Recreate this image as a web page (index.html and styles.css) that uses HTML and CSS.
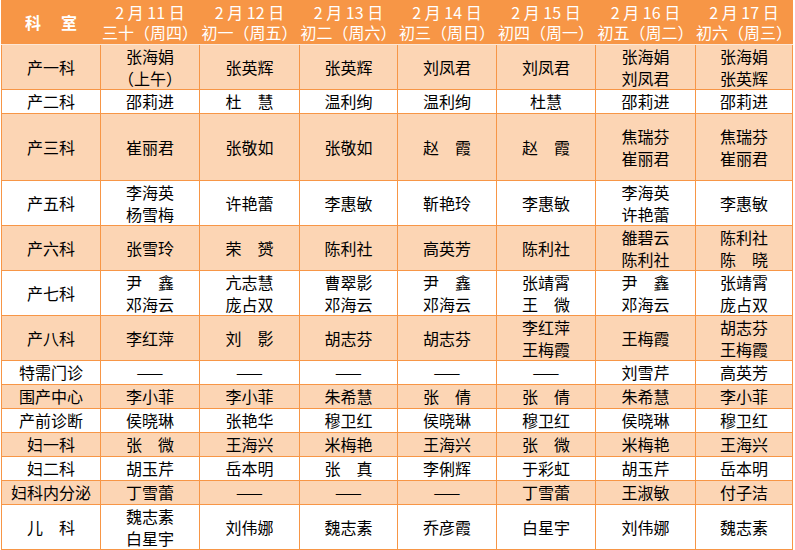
FILE: index.html
```html
<!DOCTYPE html>
<html lang="zh">
<head>
<meta charset="utf-8">
<link rel="stylesheet" href="styles.css">
</head>
<body>
<table class="sched">
<colgroup>
<col class="c0"><col class="c1"><col class="c2"><col class="c3"><col class="c4"><col class="c5"><col class="c6"><col class="c7">
</colgroup>
<thead>
<tr class="h-head">
<th class="dept-h">科　室</th>
<th><span class="hl">2 月 11 日</span><span class="hl">三十（周四）</span></th>
<th><span class="hl">2 月 12 日</span><span class="hl">初一（周五）</span></th>
<th><span class="hl">2 月 13 日</span><span class="hl">初二（周六）</span></th>
<th><span class="hl">2 月 14 日</span><span class="hl">初三（周日）</span></th>
<th><span class="hl">2 月 15 日</span><span class="hl">初四（周一）</span></th>
<th><span class="hl">2 月 16 日</span><span class="hl">初五（周二）</span></th>
<th><span class="hl">2 月 17 日</span><span class="hl">初六（周三）</span></th>
</tr>
</thead>
<tbody>
<tr class="peach h45"><td>产一科</td><td>张海娟<br>（上午）</td><td>张英辉</td><td>张英辉</td><td>刘凤君</td><td>刘凤君</td><td>张海娟<br>刘凤君</td><td>张海娟<br>张英辉</td></tr>
<tr class="white h24"><td>产二科</td><td>邵莉进</td><td>杜　慧</td><td>温利绚</td><td>温利绚</td><td>杜慧</td><td>邵莉进</td><td>邵莉进</td></tr>
<tr class="peach h67"><td>产三科</td><td>崔丽君</td><td>张敬如</td><td>张敬如</td><td>赵　霞</td><td>赵　霞</td><td>焦瑞芬<br>崔丽君</td><td>焦瑞芬<br>崔丽君</td></tr>
<tr class="white h45"><td>产五科</td><td>李海英<br>杨雪梅</td><td>许艳蕾</td><td>李惠敏</td><td>靳艳玲</td><td>李惠敏</td><td>李海英<br>许艳蕾</td><td>李惠敏</td></tr>
<tr class="peach h45"><td>产六科</td><td>张雪玲</td><td>荣　赟</td><td>陈利社</td><td>高英芳</td><td>陈利社</td><td>雒碧云<br>陈利社</td><td>陈利社<br>陈　晓</td></tr>
<tr class="white h45"><td>产七科</td><td>尹　鑫<br>邓海云</td><td>亢志慧<br>庞占双</td><td>曹翠影<br>邓海云</td><td>尹　鑫<br>邓海云</td><td>张靖霄<br>王　微</td><td>尹　鑫<br>邓海云</td><td>张靖霄<br>庞占双</td></tr>
<tr class="peach h45"><td>产八科</td><td>李红萍</td><td>刘　影</td><td>胡志芬</td><td>胡志芬</td><td>李红萍<br>王梅霞</td><td>王梅霞</td><td>胡志芬<br>王梅霞</td></tr>
<tr class="white h24"><td>特需门诊</td><td>——</td><td>——</td><td>——</td><td>——</td><td>——</td><td>刘雪芹</td><td>高英芳</td></tr>
<tr class="peach h24"><td>围产中心</td><td>李小菲</td><td>李小菲</td><td>朱希慧</td><td>张　倩</td><td>张　倩</td><td>朱希慧</td><td>李小菲</td></tr>
<tr class="white h24"><td>产前诊断</td><td>侯晓琳</td><td>张艳华</td><td>穆卫红</td><td>侯晓琳</td><td>穆卫红</td><td>侯晓琳</td><td>穆卫红</td></tr>
<tr class="peach h24"><td>妇一科</td><td>张　微</td><td>王海兴</td><td>米梅艳</td><td>王海兴</td><td>张　微</td><td>米梅艳</td><td>王海兴</td></tr>
<tr class="white h24"><td>妇二科</td><td>胡玉芹</td><td>岳本明</td><td>张　真</td><td>李俐辉</td><td>于彩虹</td><td>胡玉芹</td><td>岳本明</td></tr>
<tr class="peach h24"><td>妇科内分泌</td><td>丁雪蕾</td><td>——</td><td>——</td><td>——</td><td>丁雪蕾</td><td>王淑敏</td><td>付子洁</td></tr>
<tr class="white h44"><td>儿　科</td><td>魏志素<br>白星宇</td><td>刘伟娜</td><td>魏志素</td><td>乔彦霞</td><td>白星宇</td><td>刘伟娜</td><td>魏志素</td></tr>
</tbody>
</table>
</body>
</html>
```
FILE: styles.css
```css
html, body {
  margin: 0;
  padding: 0;
  background: #ffffff;
}
body {
  font-family: "Noto Sans CJK SC", "Noto Sans", sans-serif;
  font-size: 16px;
  color: #000;
}
.sched {
  margin-left: 1px;
  width: 792px;
  border-collapse: collapse;
  table-layout: fixed;
}
.c0 { width: 99px; }
.c1 { width: 99px; }
.c2 { width: 100px; }
.c3 { width: 98px; }
.c4 { width: 99px; }
.c5 { width: 99px; }
.c6 { width: 100px; }
.c7 { width: 97px; }
.sched th, .sched td {
  padding: 0;
  text-align: center;
  vertical-align: middle;
  line-height: 22px;
  white-space: nowrap;
  overflow: hidden;
}
.sched td {
  border: 1px solid #f79646;
}
.sched th {
  background: #f79646;
  color: #fff;
  font-weight: normal;
  border: 1px solid #f79646;
  border-top: none;
  border-bottom: 1px solid #fde7d6;
}
.hl {
  display: block;
  height: 20px;
  line-height: 20px;
}
.sched th.dept-h {
  font-weight: bold;
  letter-spacing: 2px;
  padding-left: 2px;
}
.h-head { height: 44px; }
.peach td { background: #fcd5b4; }
.white td { background: #ffffff; }
.h24 { height: 24px; }
.h44 { height: 44px; }
.h45 { height: 45px; }
.h67 { height: 67px; }
```
